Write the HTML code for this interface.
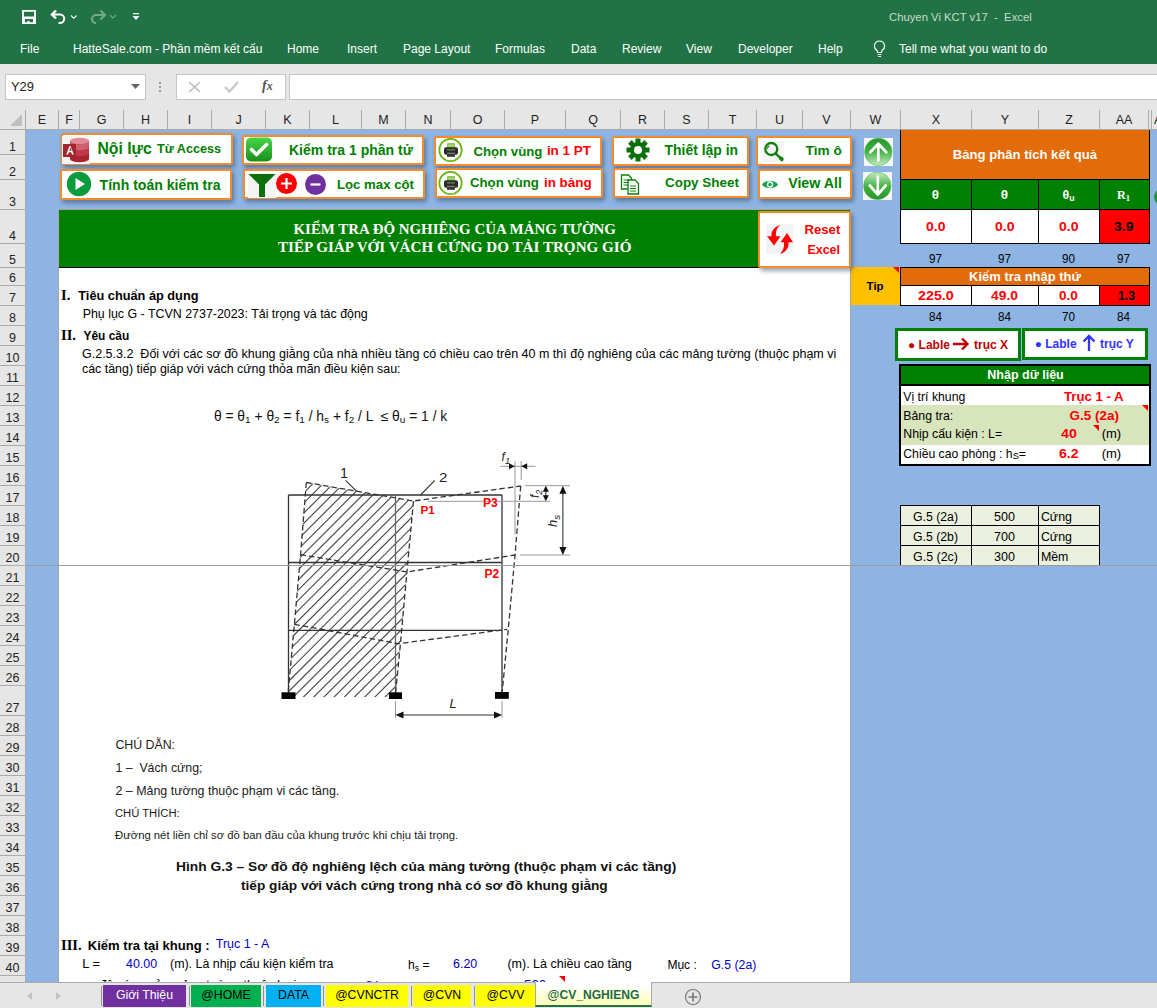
<!DOCTYPE html>
<html><head><meta charset="utf-8">
<style>
*{box-sizing:border-box}
body{margin:0;width:1157px;height:1008px;overflow:hidden;position:relative;font-family:"Liberation Sans",sans-serif;background:#8DB4E2}
.a{position:absolute;white-space:pre}
#title{left:0;top:0;width:1157px;height:64px;background:#217346}
.tab{position:absolute;top:42px;color:#fff;font-size:12px;line-height:14px}
#fbar{left:0;top:64px;width:1157px;height:46px;background:#E6E6E6}
#colh{left:0;top:110px;width:1157px;height:20px;background:#E6E6E6;border-bottom:1px solid #ABABAB}
.ch{position:absolute;top:0;height:19px;border-right:1px solid #ABABAB;font-size:12.5px;line-height:20px;text-align:center;color:#222}
#rowh{left:0;top:130px;width:26px;height:852px;background:#E6E6E6;border-right:1px solid #ABABAB}
.rh{position:absolute;left:0;width:25px;border-bottom:1px solid #ABABAB;font-size:12.5px;text-align:center;color:#222}
#tabs{left:0;top:982px;width:1157px;height:26px;background:#E6E6E6;border-top:1px solid #ABABAB}
.st{position:absolute;top:2px;height:22px;font-size:12.3px;line-height:20px;text-align:center}
.sep{position:absolute;top:3px;width:1px;height:20px;background:#8F8F8F}
.t{position:absolute;white-space:pre;line-height:1}</style></head><body>
<div id="title" class="a">
 <!-- save icon -->
 <svg class="a" style="left:22px;top:10px" width="14" height="14" viewBox="0 0 14 14"><path d="M0 0h14v14H0z M2 1.8v4.7h10V1.8z M3 9v3.3h2.5v-1.6h2v1.6H11V9z" fill="#fff" fill-rule="evenodd"/></svg>
 <svg class="a" style="left:50px;top:9px" width="30" height="15" viewBox="0 0 30 15"><path d="M3.5 5.5h6.5a4.2 4.2 0 0 1 0 8.4h-1.5" fill="none" stroke="#fff" stroke-width="2"/><path d="M6 1.5 2 5.5l4 4" fill="none" stroke="#fff" stroke-width="2.4"/><path d="M21 6.5l2.8 2.8 2.8-2.8" fill="none" stroke="#fff" stroke-width="1.1"/></svg>
 <svg class="a" style="left:89px;top:9px" width="30" height="15" viewBox="0 0 30 15"><path d="M15 6h-8a4 4 0 0 0 0 8" fill="none" stroke="#6FA98A" stroke-width="2.2"/><path d="M11.5 1.5 16 6l-4.5 4.5" fill="none" stroke="#6FA98A" stroke-width="2.2"/><path d="M21 6l3 3 3-3" fill="none" stroke="#6FA98A" stroke-width="1.2"/></svg>
 <svg class="a" style="left:132px;top:12px" width="8" height="9" viewBox="0 0 8 9"><rect x="1" y="1" width="6" height="1.3" fill="#fff"/><path d="M0.5 4h7l-3.5 4z" fill="#fff"/></svg>
 <div class="a" style="left:889px;top:11px;font-size:11.3px;color:#C8DCCF">Chuyen Vi KCT v17  -  Excel</div>
 <div class="tab" style="left:20px">File</div>
 <div class="tab" style="left:73px">HatteSale.com - Phần mềm kết cấu</div>
 <div class="tab" style="left:287px">Home</div>
 <div class="tab" style="left:347px">Insert</div>
 <div class="tab" style="left:403px">Page Layout</div>
 <div class="tab" style="left:495px">Formulas</div>
 <div class="tab" style="left:571px">Data</div>
 <div class="tab" style="left:622px">Review</div>
 <div class="tab" style="left:686px">View</div>
 <div class="tab" style="left:738px">Developer</div>
 <div class="tab" style="left:818px">Help</div>
 <svg class="a" style="left:873px;top:40px" width="13" height="18" viewBox="0 0 13 18"><path d="M6.5 1a5 5 0 0 0-3 9c.8.7 1 1.5 1 2.5h4c0-1 .2-1.8 1-2.5a5 5 0 0 0-3-9z" fill="none" stroke="#fff" stroke-width="1.2"/><path d="M4.5 14.5h4M5 16.5h3" stroke="#fff" stroke-width="1.2"/></svg>
 <div class="tab" style="left:899px">Tell me what you want to do</div>
</div>
<div id="fbar" class="a">
 <div class="a" style="left:5px;top:10px;width:141px;height:26px;background:#fff;border:1px solid #C6C6C6"></div>
 <div class="a" style="left:11px;top:15px;font-size:12.9px;color:#222">Y29</div>
 <svg class="a" style="left:131px;top:20px" width="9" height="5"><path d="M0 0h9L4.5 5z" fill="#666"/></svg>
 <div class="a" style="left:159px;top:18px;width:2px;height:2px;background:#999;box-shadow:0 4px #999,0 8px #999"></div>
 <div class="a" style="left:176px;top:10px;width:110px;height:26px;background:#fff;border:1px solid #C6C6C6"></div>
 <svg class="a" style="left:188px;top:17px" width="13" height="12"><path d="M1 1l11 10M12 1 1 11" stroke="#BDBDBD" stroke-width="1.6"/></svg>
 <svg class="a" style="left:224px;top:17px" width="15" height="12"><path d="M1 6l4.5 4.5L14 1" fill="none" stroke="#C8C8C8" stroke-width="2.4"/></svg>
 <div class="a" style="left:262px;top:14px;font-family:'Liberation Serif';font-style:italic;font-weight:700;font-size:14px;color:#555">f<span style="font-size:12px">x</span></div>
 <div class="a" style="left:289px;top:10px;width:880px;height:26px;background:#fff;border:1px solid #C6C6C6"></div>
</div>
<div id="colh" class="a">
 <svg class="a" style="left:10px;top:4px" width="13" height="12"><path d="M12 0v12H0z" fill="#BFBFBF"/></svg>
 <div class="ch" style="left:0;width:26px"></div>
 <div class="ch" style="left:26px;width:33px">E</div>
 <div class="ch" style="left:59px;width:21px">F</div>
 <div class="ch" style="left:80px;width:44px">G</div>
 <div class="ch" style="left:124px;width:44px">H</div>
 <div class="ch" style="left:168px;width:44px">I</div>
 <div class="ch" style="left:212px;width:54px">J</div>
 <div class="ch" style="left:266px;width:44px">K</div>
 <div class="ch" style="left:310px;width:52px">L</div>
 <div class="ch" style="left:362px;width:44px">M</div>
 <div class="ch" style="left:406px;width:45px">N</div>
 <div class="ch" style="left:451px;width:54px">O</div>
 <div class="ch" style="left:505px;width:61px">P</div>
 <div class="ch" style="left:566px;width:55px">Q</div>
 <div class="ch" style="left:621px;width:44px">R</div>
 <div class="ch" style="left:665px;width:44px">S</div>
 <div class="ch" style="left:709px;width:48px">T</div>
 <div class="ch" style="left:757px;width:46px">U</div>
 <div class="ch" style="left:803px;width:48px">V</div>
 <div class="ch" style="left:851px;width:50px">W</div>
 <div class="ch" style="left:901px;width:71px">X</div>
 <div class="ch" style="left:972px;width:67px">Y</div>
 <div class="ch" style="left:1039px;width:61px">Z</div>
 <div class="ch" style="left:1100px;width:49px">AA</div>
 <div class="ch" style="left:1149px;width:3px"></div><div class="ch" style="left:1152px;width:40px;text-align:left;padding-left:2px">AB</div>
</div>
<div id="rowh" class="a">
<div class="rh" style="top:0px;height:25px;line-height:34px">1</div>
<div class="rh" style="top:25px;height:25px;line-height:34px">2</div>
<div class="rh" style="top:50px;height:30px;line-height:44px">3</div>
<div class="rh" style="top:80px;height:34px;line-height:52px">4</div>
<div class="rh" style="top:114px;height:24px;line-height:32px">5</div>
<div class="rh" style="top:138px;height:18px;line-height:20px">6</div>
<div class="rh" style="top:156px;height:20px;line-height:24px">7</div>
<div class="rh" style="top:176px;height:20px;line-height:24px">8</div>
<div class="rh" style="top:196px;height:20px;line-height:24px">9</div>
<div class="rh" style="top:216px;height:20px;line-height:24px">10</div>
<div class="rh" style="top:236px;height:20px;line-height:24px">11</div>
<div class="rh" style="top:256px;height:20px;line-height:24px">12</div>
<div class="rh" style="top:276px;height:20px;line-height:24px">13</div>
<div class="rh" style="top:296px;height:20px;line-height:24px">14</div>
<div class="rh" style="top:316px;height:20px;line-height:24px">15</div>
<div class="rh" style="top:336px;height:20px;line-height:24px">16</div>
<div class="rh" style="top:356px;height:20px;line-height:24px">17</div>
<div class="rh" style="top:376px;height:20px;line-height:24px">18</div>
<div class="rh" style="top:396px;height:20px;line-height:24px">19</div>
<div class="rh" style="top:416px;height:20px;line-height:24px">20</div>
<div class="rh" style="top:436px;height:20px;line-height:24px">21</div>
<div class="rh" style="top:456px;height:20px;line-height:24px">22</div>
<div class="rh" style="top:476px;height:20px;line-height:24px">23</div>
<div class="rh" style="top:496px;height:20px;line-height:24px">24</div>
<div class="rh" style="top:516px;height:20px;line-height:24px">25</div>
<div class="rh" style="top:536px;height:20px;line-height:24px">26</div>
<div class="rh" style="top:556px;height:30px;line-height:44px">27</div>
<div class="rh" style="top:586px;height:20px;line-height:24px">28</div>
<div class="rh" style="top:606px;height:20px;line-height:24px">29</div>
<div class="rh" style="top:626px;height:20px;line-height:24px">30</div>
<div class="rh" style="top:646px;height:20px;line-height:24px">31</div>
<div class="rh" style="top:666px;height:20px;line-height:24px">32</div>
<div class="rh" style="top:686px;height:20px;line-height:24px">33</div>
<div class="rh" style="top:706px;height:20px;line-height:24px">34</div>
<div class="rh" style="top:726px;height:20px;line-height:24px">35</div>
<div class="rh" style="top:746px;height:20px;line-height:24px">36</div>
<div class="rh" style="top:766px;height:20px;line-height:24px">37</div>
<div class="rh" style="top:786px;height:20px;line-height:24px">38</div>
<div class="rh" style="top:806px;height:20px;line-height:24px">39</div>
<div class="rh" style="top:826px;height:20px;line-height:24px">40</div>
<div class="rh" style="top:846px;height:20px;line-height:24px">41</div>
</div>
<div style="position:absolute;left:0;top:0;width:1157px;height:982px;overflow:hidden">
<div class="a" style="left:59px;top:268px;width:791px;height:720px;background:#fff"></div>
<div class="a" style="left:58px;top:209px;width:793px;height:780px;border:1px solid #A6A6A6;border-bottom:0"></div>
<div class="a" style="left:59px;top:210px;width:791px;height:58px;background:#008000;border-bottom:1px solid #000"></div>
<div class="a" style="left:61px;top:133px;width:172px;height:32px;background:#fff;border:2px solid #F68B2C;border-radius:2px;box-shadow:2px 3px 4px rgba(30,50,80,.45)"></div>
<div class="a" style="left:60px;top:169px;width:172px;height:31px;background:#fff;border:2px solid #F68B2C;border-radius:2px;box-shadow:2px 3px 4px rgba(30,50,80,.45)"></div>
<div class="a" style="left:242px;top:135px;width:182px;height:30px;background:#fff;border:2px solid #F68B2C;border-radius:2px;box-shadow:2px 3px 4px rgba(30,50,80,.45)"></div>
<div class="a" style="left:243px;top:169px;width:182px;height:30px;background:#fff;border:2px solid #F68B2C;border-radius:2px;box-shadow:2px 3px 4px rgba(30,50,80,.45)"></div>
<div class="a" style="left:434px;top:136px;width:168px;height:30px;background:#fff;border:2px solid #F68B2C;border-radius:2px;box-shadow:2px 3px 4px rgba(30,50,80,.45)"></div>
<div class="a" style="left:435px;top:168px;width:168px;height:30px;background:#fff;border:2px solid #F68B2C;border-radius:2px;box-shadow:2px 3px 4px rgba(30,50,80,.45)"></div>
<div class="a" style="left:612px;top:136px;width:137px;height:30px;background:#fff;border:2px solid #F68B2C;border-radius:2px;box-shadow:2px 3px 4px rgba(30,50,80,.45)"></div>
<div class="a" style="left:613px;top:168px;width:136px;height:30px;background:#fff;border:2px solid #F68B2C;border-radius:2px;box-shadow:2px 3px 4px rgba(30,50,80,.45)"></div>
<div class="a" style="left:756px;top:136px;width:96px;height:30px;background:#fff;border:2px solid #F68B2C;border-radius:2px;box-shadow:2px 3px 4px rgba(30,50,80,.45)"></div>
<div class="a" style="left:758px;top:169px;width:94px;height:30px;background:#fff;border:2px solid #F68B2C;border-radius:2px;box-shadow:2px 3px 4px rgba(30,50,80,.45)"></div>
<svg class="a" style="left:62px;top:136px" width="28" height="28" viewBox="0 0 28 28">
<rect x="0" y="0" width="28" height="28" fill="#F4F4F4"/>
<path d="M8 5v18a9.5 3.2 0 0 0 19 0V5z" fill="#A8232F"/>
<path d="M8 11a9.5 3.2 0 0 0 19 0v6a9.5 3.2 0 0 1-19 0z" fill="#BF3A48"/>
<path d="M8 5a9.5 3.2 0 0 0 19 0v6a9.5 3.2 0 0 1-19 0z" fill="#D06070"/>
<ellipse cx="17.5" cy="5" rx="9.5" ry="3.2" fill="#E08A98"/>
<rect x="1" y="8" width="13" height="13" fill="#A4262C"/>
<path d="M4.2 18.5 7.5 10h1l3.3 8.5h-1.8l-.8-2.2H6.8L6 18.5zM7.3 14.8h2.4L8.5 11.6z" fill="#fff"/>
</svg>
<svg class="a" style="left:66px;top:171px" width="26" height="26" viewBox="0 0 26 26"><circle cx="13" cy="13" r="12.2" fill="#0A9B3C"/><path d="M9.5 7v12l9.5-6z" fill="#fff"/></svg>
<svg class="a" style="left:245px;top:137px" width="28" height="25" viewBox="0 0 28 25"><defs><linearGradient id="gck" x1="0" y1="0" x2="0" y2="1"><stop offset="0" stop-color="#45D845"/><stop offset="1" stop-color="#1A8F1A"/></linearGradient></defs>
<rect x="1" y="0.5" width="26" height="24" rx="5" fill="url(#gck)"/><path d="M6.5 12.5l5 5 10-10" fill="none" stroke="#fff" stroke-width="3.6" stroke-linecap="round" stroke-linejoin="round"/></svg>
<div class="a" style="left:248px;top:173px;width:28px;height:25px;background:#F4F4F4"></div>
<svg class="a" style="left:248px;top:173px" width="28" height="25" viewBox="0 0 28 25"><path d="M0.5 1h27L17 11.5V24h-6V11.5z" fill="#0B700B"/></svg>
<svg class="a" style="left:275px;top:172px" width="23" height="23" viewBox="0 0 23 23"><circle cx="11.5" cy="11.5" r="10.5" fill="#FF0000"/><path d="M11.5 6v11M6 11.5h11" stroke="#fff" stroke-width="2.2"/></svg>
<svg class="a" style="left:304px;top:173px" width="23" height="23" viewBox="0 0 23 23"><circle cx="11.5" cy="11.5" r="10.5" fill="#7030A0"/><path d="M6.5 11.5h10" stroke="#fff" stroke-width="2.2"/></svg>
<svg class="a" style="left:438px;top:138px" width="25" height="25" viewBox="0 0 25 25"><circle cx="12.5" cy="12" r="11.2" fill="#fff" stroke="#6BB814" stroke-width="1.8"/>
<rect x="9" y="5" width="8" height="7" rx="0.8" fill="#8CC850"/><rect x="10" y="7" width="6" height="1" fill="#B5DC90"/><rect x="10" y="9" width="6" height="1" fill="#B5DC90"/>
<rect x="6" y="9.3" width="14" height="7.5" rx="2" fill="#2A2A2A"/><rect x="9" y="11.5" width="8" height="0.8" fill="#8CC850"/><rect x="9" y="14.7" width="8" height="1.5" fill="#777"/><rect x="9" y="16.2" width="8" height="2.6" fill="#333"/></svg>
<svg class="a" style="left:438px;top:171px" width="25" height="25" viewBox="0 0 25 25"><circle cx="12.5" cy="12" r="11.2" fill="#fff" stroke="#6BB814" stroke-width="1.8"/>
<rect x="9" y="5" width="8" height="7" rx="0.8" fill="#8CC850"/><rect x="10" y="7" width="6" height="1" fill="#B5DC90"/><rect x="10" y="9" width="6" height="1" fill="#B5DC90"/>
<rect x="6" y="9.3" width="14" height="7.5" rx="2" fill="#2A2A2A"/><rect x="9" y="11.5" width="8" height="0.8" fill="#8CC850"/><rect x="9" y="14.7" width="8" height="1.5" fill="#777"/><rect x="9" y="16.2" width="8" height="2.6" fill="#333"/></svg>
<svg class="a" style="left:626px;top:138px" width="24" height="24" viewBox="0 0 24 24"><g fill="#0B700B">
<circle cx="12" cy="12" r="8"/>
<rect x="9.5" y="0.5" width="5" height="5"/><rect x="9.5" y="18.5" width="5" height="5"/><rect x="0.5" y="9.5" width="5" height="5"/><rect x="18.5" y="9.5" width="5" height="5"/>
<rect x="9.5" y="0.5" width="5" height="5" transform="rotate(45 12 12)"/><rect x="9.5" y="18.5" width="5" height="5" transform="rotate(45 12 12)"/><rect x="0.5" y="9.5" width="5" height="5" transform="rotate(45 12 12)"/><rect x="18.5" y="9.5" width="5" height="5" transform="rotate(45 12 12)"/>
</g><circle cx="12" cy="12" r="4" fill="#fff"/></svg>
<svg class="a" style="left:620px;top:174px" width="22" height="21" viewBox="0 0 22 21"><g fill="#fff" stroke="#0B800B" stroke-width="1.3">
<path d="M1.5 1h7l3 3v11h-10z"/><path d="M8 6h7l3.5 3.5V20H8z"/></g>
<path d="M3.5 6h5M3.5 8.5h5M3.5 11h5M10 12h6M10 14.5h6M10 17h6" stroke="#0B800B" stroke-width="1"/></svg>
<div class="a" style="left:763px;top:141px;width:21px;height:21px;background:#F4F4F4"></div>
<svg class="a" style="left:763px;top:141px" width="22" height="22" viewBox="0 0 22 22"><circle cx="8.3" cy="8" r="6" fill="none" stroke="#0B800B" stroke-width="2.3"/><path d="M6.3 4.8a3.3 3.3 0 0 0-1.8 3" fill="none" stroke="#0B800B" stroke-width="1.2"/><path d="M12.5 12.3l5.5 5.2" stroke="#0B800B" stroke-width="2.4" stroke-linecap="round"/><ellipse cx="18.3" cy="17.8" rx="2.6" ry="2" transform="rotate(40 18.3 17.8)" fill="#0B800B"/></svg>
<svg class="a" style="left:761px;top:178px" width="18" height="13" viewBox="0 0 18 13"><path d="M1 6.5C4 1.5 14 1.5 17 6.5 14 11.5 4 11.5 1 6.5z" fill="#14A44D"/><circle cx="9" cy="6.5" r="3.2" fill="#fff"/><circle cx="9" cy="6.5" r="1.8" fill="#14A44D"/></svg>
<svg class="a" style="left:864px;top:138px" width="29" height="28" viewBox="0 0 29 28"><rect width="29" height="28" fill="#F6F6F6"/><defs><linearGradient id="ga1" x1="0" y1="0" x2="0" y2="1"><stop offset="0" stop-color="#2A962A"/><stop offset="0.45" stop-color="#3DAF3D"/><stop offset="1" stop-color="#C5EBC5"/></linearGradient></defs><circle cx="14.3" cy="13.9" r="13.7" fill="url(#ga1)" stroke="#3FB83F" stroke-width="0.6"/><path d="M14.3 22.5V6M6.3 14.3l8-8.5 8 8.5" fill="none" stroke="#fff" stroke-width="2.7" stroke-linecap="round" stroke-linejoin="round"/></svg>
<svg class="a" style="left:863px;top:172px" width="29" height="28" viewBox="0 0 29 28"><rect width="29" height="28" fill="#F6F6F6"/><defs><linearGradient id="ga2" x1="0" y1="1" x2="0" y2="0"><stop offset="0" stop-color="#2A962A"/><stop offset="0.45" stop-color="#3DAF3D"/><stop offset="1" stop-color="#C5EBC5"/></linearGradient></defs><circle cx="14.3" cy="13.9" r="13.7" fill="url(#ga2)" stroke="#3FB83F" stroke-width="0.6"/><path d="M14.8 4.5V22.5M6.8 13.5l8 9 8-9" fill="none" stroke="#fff" stroke-width="2.7" stroke-linecap="round" stroke-linejoin="round"/></svg>
<div class="t" style="left:97.4px;top:140.64px;font-size:15.78px;font-weight:700;color:#008000;font-family:'Liberation Sans';">Nội lực</div>
<div class="t" style="left:157px;top:143.33px;font-size:12.60px;font-weight:700;color:#008000;font-family:'Liberation Sans';">Từ Access</div>
<div class="t" style="left:99.6px;top:177.51px;font-size:14.05px;font-weight:700;color:#008000;font-family:'Liberation Sans';">Tính toán kiểm tra</div>
<div class="t" style="left:289px;top:142.92px;font-size:14.03px;font-weight:700;color:#008000;font-family:'Liberation Sans';">Kiểm tra 1 phần tử</div>
<div class="t" style="left:337px;top:177.63px;font-size:13.19px;font-weight:700;color:#008000;font-family:'Liberation Sans';">Lọc max cột</div>
<div class="t" style="left:473.4px;top:144.50px;font-size:13.23px;font-weight:700;color:#008000;font-family:'Liberation Sans';">Chọn vùng</div>
<div class="t" style="left:546.9px;top:144.32px;font-size:13.45px;font-weight:700;color:#FF0000;font-family:'Liberation Sans';">in 1 PT</div>
<div class="t" style="left:470px;top:176.42px;font-size:13.21px;font-weight:700;color:#008000;font-family:'Liberation Sans';">Chọn vùng</div>
<div class="t" style="left:543.9px;top:176.20px;font-size:13.47px;font-weight:700;color:#FF0000;font-family:'Liberation Sans';">in bảng</div>
<div class="t" style="left:664.6px;top:143.93px;font-size:13.91px;font-weight:700;color:#008000;font-family:'Liberation Sans';">Thiết lập in</div>
<div class="t" style="left:665px;top:176.21px;font-size:13.45px;font-weight:700;color:#008000;font-family:'Liberation Sans';">Copy Sheet</div>
<div class="t" style="left:805.5px;top:144.18px;font-size:13.61px;font-weight:700;color:#008000;font-family:'Liberation Sans';">Tìm ô</div>
<div class="t" style="left:788.2px;top:176.45px;font-size:14.23px;font-weight:700;color:#008000;font-family:'Liberation Sans';">View All</div>
<div class="t" style="left:293.5px;top:221.52px;font-size:14.90px;font-weight:700;color:#fff;font-family:'Liberation Serif';">KIỂM TRA ĐỘ NGHIÊNG CỦA MẢNG TƯỜNG</div>
<div class="t" style="left:278px;top:240.34px;font-size:15.12px;font-weight:700;color:#fff;font-family:'Liberation Serif';">TIẾP GIÁP VỚI VÁCH CỨNG DO TẢI TRỌNG GIÓ</div>
<div class="t" style="left:61px;top:287.86px;font-size:14.50px;font-weight:700;color:#000;font-family:'Liberation Serif';">I.</div>
<div class="t" style="left:78.3px;top:289.71px;font-size:12.75px;font-weight:700;color:#000;font-family:'Liberation Sans';">Tiêu chuẩn áp dụng</div>
<div class="t" style="left:82.7px;top:308.09px;font-size:12.42px;font-weight:400;color:#000;font-family:'Liberation Sans';">Phụ lục G - TCVN 2737-2023: Tải trọng và tác động</div>
<div class="t" style="left:61px;top:327.86px;font-size:14.50px;font-weight:700;color:#000;font-family:'Liberation Serif';">II.</div>
<div class="t" style="left:83.5px;top:330.69px;font-size:11.94px;font-weight:700;color:#000;font-family:'Liberation Sans';">Yêu cầu</div>
<div class="t" style="left:82px;top:348.12px;font-size:12.50px;font-weight:400;color:#000;font-family:'Liberation Sans';">G.2.5.3.2  Đối với các sơ đồ khung giằng của nhà nhiều tầng có chiều cao trên 40 m thì độ nghiêng của các mảng tường (thuộc phạm vi</div>
<div class="t" style="left:82px;top:363.48px;font-size:12.42px;font-weight:400;color:#000;font-family:'Liberation Sans';">các tầng) tiếp giáp với vách cứng thỏa mãn điều kiện sau:</div>
<div class="t" style="left:213.9px;top:409.88px;font-size:13.85px;font-weight:400;color:#111;font-family:'Liberation Sans';">θ = θ<span style="font-size:0.72em;vertical-align:-0.25em">1</span> + θ<span style="font-size:0.72em;vertical-align:-0.25em">2</span> = f<span style="font-size:0.72em;vertical-align:-0.25em">1</span> / h<span style="font-size:0.72em;vertical-align:-0.25em">s</span> + f<span style="font-size:0.72em;vertical-align:-0.25em">2</span> / L  ≤ θ<span style="font-size:0.72em;vertical-align:-0.25em">u</span> = 1 / k</div>
<div class="t" style="left:115.4px;top:738.65px;font-size:12.35px;font-weight:400;color:#1a1a1a;font-family:'Liberation Sans';">CHÚ DẪN:</div>
<div class="t" style="left:115.4px;top:761.56px;font-size:12.33px;font-weight:400;color:#1a1a1a;font-family:'Liberation Sans';">1 –  Vách cứng;</div>
<div class="t" style="left:115.4px;top:785.07px;font-size:12.44px;font-weight:400;color:#1a1a1a;font-family:'Liberation Sans';">2 – Mảng tường thuộc phạm vi các tầng.</div>
<div class="t" style="left:115px;top:808.49px;font-size:11.23px;font-weight:400;color:#1a1a1a;font-family:'Liberation Sans';">CHÚ THÍCH:</div>
<div class="t" style="left:115px;top:830.24px;font-size:11.30px;font-weight:400;color:#1a1a1a;font-family:'Liberation Sans';">Đường nét liền chỉ sơ đồ ban đầu của khung trước khi chịu tải trọng.</div>
<div class="t" style="left:176.2px;top:861.46px;font-size:12.80px;font-weight:700;color:#111;font-family:'Liberation Sans';transform:scaleX(1.0765);transform-origin:0 0;">Hình G.3 – Sơ đồ độ nghiêng lệch của mảng tường (thuộc phạm vi các tầng)</div>
<div class="t" style="left:241px;top:879.86px;font-size:12.80px;font-weight:700;color:#111;font-family:'Liberation Sans';transform:scaleX(1.0664);transform-origin:0 0;">tiếp giáp với vách cứng trong nhà có sơ đồ khung giằng</div>
<div class="t" style="left:61px;top:938.16px;font-size:14.50px;font-weight:700;color:#000;font-family:'Liberation Serif';">III.</div>
<div class="t" style="left:87.8px;top:938.95px;font-size:13.06px;font-weight:700;color:#000;font-family:'Liberation Sans';">Kiểm tra tại khung :</div>
<div class="t" style="left:215.8px;top:938.05px;font-size:12.46px;font-weight:400;color:#0000CC;font-family:'Liberation Sans';">Trục 1 - A</div>
<div class="t" style="left:82.3px;top:958.04px;font-size:12.83px;font-weight:400;color:#000;font-family:'Liberation Sans';">L =</div>
<div class="t" style="left:125.9px;top:958.40px;font-size:12.40px;font-weight:400;color:#0000CC;font-family:'Liberation Sans';transform:scaleX(1.0027);transform-origin:0 0;">40.00</div>
<div class="t" style="left:170px;top:958.40px;font-size:12.41px;font-weight:400;color:#000;font-family:'Liberation Sans';">(m). Là nhịp cấu kiện kiểm tra</div>
<div class="t" style="left:408px;top:959.32px;font-size:12.15px;font-weight:400;color:#000;font-family:'Liberation Sans';">h<span style="font-size:0.72em;vertical-align:-0.25em">s</span> =</div>
<div class="t" style="left:453px;top:958.40px;font-size:12.40px;font-weight:400;color:#0000CC;font-family:'Liberation Sans';transform:scaleX(1.0073);transform-origin:0 0;">6.20</div>
<div class="t" style="left:507.4px;top:958.31px;font-size:12.51px;font-weight:400;color:#000;font-family:'Liberation Sans';">(m). Là chiều cao tầng</div>
<div class="t" style="left:667.4px;top:958.71px;font-size:12.03px;font-weight:400;color:#000;font-family:'Liberation Sans';">Mục :</div>
<div class="t" style="left:711.3px;top:958.51px;font-size:12.28px;font-weight:400;color:#0000CC;font-family:'Liberation Sans';">G.5 (2a)</div>
<div class="t" style="left:92px;top:979.00px;font-size:12.40px;font-weight:400;color:#000;font-family:'Liberation Sans';">- độ cứng của mảng tường thuộc loại :</div>
<div class="t" style="left:365px;top:979.93px;font-size:10.71px;font-weight:400;color:#0000CC;font-family:'Liberation Sans';">Cứng</div>
<div class="t" style="left:523.7px;top:978.50px;font-size:12.40px;font-weight:400;color:#0000CC;font-family:'Liberation Sans';transform:scaleX(1.0731);transform-origin:0 0;">500</div>
<svg class="a" style="left:559px;top:976px" width="6" height="6"><path d="M0 0h6v6z" fill="#f00"/></svg>
<div class="a" style="left:900px;top:130px;width:250px;height:114px;background:#fff;border:1px solid #000"></div>
<div class="a" style="left:901px;top:130px;width:248px;height:49px;background:#E26B0A"></div>
<div class="a" style="left:901px;top:179px;width:248px;height:1px;background:#000"></div>
<div class="a" style="left:901px;top:180px;width:248px;height:29px;background:#008000"></div>
<div class="a" style="left:901px;top:209px;width:248px;height:1px;background:#000"></div>
<div class="a" style="left:1100px;top:210px;width:49px;height:33px;background:#f00"></div>
<div class="a" style="left:971px;top:179px;width:1px;height:64px;background:#000"></div>
<div class="a" style="left:1038px;top:179px;width:1px;height:64px;background:#000"></div>
<div class="a" style="left:1099px;top:179px;width:1px;height:64px;background:#000"></div>
<div class="t" style="left:952.8px;top:148.10px;font-size:13.11px;font-weight:700;color:#fff;font-family:'Liberation Sans';">Bảng phân tích kết quả</div>
<div class="t" style="left:931.85px;top:187.87px;font-size:13.50px;font-weight:700;color:#fff;font-family:'Liberation Sans';">θ</div>
<div class="t" style="left:1000.85px;top:187.87px;font-size:13.50px;font-weight:700;color:#fff;font-family:'Liberation Sans';">θ</div>
<div class="t" style="left:1062.5px;top:188.81px;font-size:12.39px;font-weight:700;color:#fff;font-family:'Liberation Sans';">θ<span style="font-size:0.7em;vertical-align:-0.2em">u</span></div>
<div class="t" style="left:1117.0px;top:189.14px;font-size:12.13px;font-weight:700;color:#fff;font-family:'Liberation Serif';">R<span style="font-size:0.7em;vertical-align:-0.2em">1</span></div>
<div class="t" style="left:925.8px;top:220.74px;font-size:12.00px;font-weight:700;color:#FF0000;font-family:'Liberation Sans';transform:scaleX(1.1625);transform-origin:0 0;">0.0</div>
<div class="t" style="left:994.8px;top:220.74px;font-size:12.00px;font-weight:700;color:#FF0000;font-family:'Liberation Sans';transform:scaleX(1.1625);transform-origin:0 0;">0.0</div>
<div class="t" style="left:1058.8px;top:220.74px;font-size:12.00px;font-weight:700;color:#FF0000;font-family:'Liberation Sans';transform:scaleX(1.1625);transform-origin:0 0;">0.0</div>
<div class="t" style="left:1113.8px;top:220.74px;font-size:12.00px;font-weight:700;color:#000;font-family:'Liberation Sans';transform:scaleX(1.1625);transform-origin:0 0;">3.9</div>
<div class="t" style="left:929.0px;top:252.50px;font-size:12.40px;font-weight:400;color:#000;font-family:'Liberation Sans';transform:scaleX(0.9422);transform-origin:0 0;">97</div>
<div class="t" style="left:998.0px;top:252.50px;font-size:12.40px;font-weight:400;color:#000;font-family:'Liberation Sans';transform:scaleX(0.9422);transform-origin:0 0;">97</div>
<div class="t" style="left:1062.0px;top:252.50px;font-size:12.40px;font-weight:400;color:#000;font-family:'Liberation Sans';transform:scaleX(0.9422);transform-origin:0 0;">90</div>
<div class="t" style="left:1117.0px;top:252.50px;font-size:12.40px;font-weight:400;color:#000;font-family:'Liberation Sans';transform:scaleX(0.9422);transform-origin:0 0;">97</div>
<div class="a" style="left:851px;top:267px;width:49px;height:38px;background:#FFC000"></div>
<svg class="a" style="left:893px;top:267px" width="6" height="6"><path d="M0 0h6v6z" fill="#f00"/></svg>
<div class="t" style="left:866.6px;top:281.29px;font-size:11.47px;font-weight:700;color:#000;font-family:'Liberation Sans';">Tip</div>
<div class="a" style="left:900px;top:267px;width:250px;height:39px;background:#fff;border:1px solid #000"></div>
<div class="a" style="left:901px;top:268px;width:248px;height:17px;background:#E26B0A"></div>
<div class="a" style="left:901px;top:285px;width:248px;height:1px;background:#000"></div>
<div class="a" style="left:1100px;top:286px;width:49px;height:19px;background:#f00"></div>
<div class="a" style="left:971px;top:285px;width:1px;height:20px;background:#000"></div>
<div class="a" style="left:1038px;top:285px;width:1px;height:20px;background:#000"></div>
<div class="a" style="left:1099px;top:285px;width:1px;height:20px;background:#000"></div>
<div class="t" style="left:969px;top:269.99px;font-size:13.00px;font-weight:700;color:#fff;font-family:'Liberation Sans';">Kiểm tra nhập thứ</div>
<div class="t" style="left:918.4px;top:289.74px;font-size:12.00px;font-weight:700;color:#FF0000;font-family:'Liberation Sans';transform:scaleX(1.1921);transform-origin:0 0;">225.0</div>
<div class="t" style="left:991.4px;top:289.74px;font-size:12.00px;font-weight:700;color:#FF0000;font-family:'Liberation Sans';transform:scaleX(1.1559);transform-origin:0 0;">49.0</div>
<div class="t" style="left:1059.4px;top:289.74px;font-size:12.00px;font-weight:700;color:#FF0000;font-family:'Liberation Sans';transform:scaleX(1.1326);transform-origin:0 0;">0.0</div>
<div class="t" style="left:1117.9px;top:289.74px;font-size:12.00px;font-weight:700;color:#000;font-family:'Liberation Sans';transform:scaleX(1.0247);transform-origin:0 0;">1.3</div>
<div class="t" style="left:929.0px;top:311.10px;font-size:12.40px;font-weight:400;color:#000;font-family:'Liberation Sans';transform:scaleX(0.9422);transform-origin:0 0;">84</div>
<div class="t" style="left:998.0px;top:311.10px;font-size:12.40px;font-weight:400;color:#000;font-family:'Liberation Sans';transform:scaleX(0.9422);transform-origin:0 0;">84</div>
<div class="t" style="left:1062.0px;top:311.10px;font-size:12.40px;font-weight:400;color:#000;font-family:'Liberation Sans';transform:scaleX(0.9422);transform-origin:0 0;">70</div>
<div class="t" style="left:1117.0px;top:311.10px;font-size:12.40px;font-weight:400;color:#000;font-family:'Liberation Sans';transform:scaleX(0.9422);transform-origin:0 0;">84</div>
<div class="a" style="left:895px;top:328px;width:126px;height:33px;background:#fff;border:3px solid #008000"></div>
<div class="a" style="left:1022px;top:328px;width:126px;height:32px;background:#fff;border:3px solid #008000"></div>
<div class="t" style="left:908px;top:338.74px;font-size:12.00px;font-weight:700;color:#C00000;font-family:'Liberation Sans';">● Lable</div>
<svg class="a" style="left:952px;top:337px" width="18" height="14"><path d="M1 7h15M10 1.5l5.5 5.5-5.5 5.5" fill="none" stroke="#C00000" stroke-width="2.3"/></svg>
<div class="t" style="left:974px;top:338.74px;font-size:12.00px;font-weight:700;color:#C00000;font-family:'Liberation Sans';">trục X</div>
<div class="t" style="left:1034.7px;top:338.14px;font-size:12.00px;font-weight:700;color:#3333FF;font-family:'Liberation Sans';">● Lable</div>
<svg class="a" style="left:1082px;top:334px" width="14" height="18"><path d="M7 17V2M1.5 7.5 7 2l5.5 5.5" fill="none" stroke="#3333FF" stroke-width="2.3"/></svg>
<div class="t" style="left:1100px;top:338.14px;font-size:12.00px;font-weight:700;color:#3333FF;font-family:'Liberation Sans';">trục Y</div>
<div class="a" style="left:899px;top:364px;width:252px;height:102px;background:#fff;border:2px solid #000"></div>
<div class="a" style="left:901px;top:366px;width:248px;height:18px;background:#008000"></div>
<div class="a" style="left:901px;top:384px;width:248px;height:2px;background:#000"></div>
<div class="a" style="left:901px;top:405px;width:248px;height:40px;background:#D8E4BC"></div>
<svg class="a" style="left:1142px;top:405px" width="6" height="6"><path d="M0 0h6v6z" fill="#f00"/></svg>
<svg class="a" style="left:1093px;top:425px" width="6" height="6"><path d="M0 0h6v6z" fill="#f00"/></svg>
<div class="t" style="left:987.3px;top:369.42px;font-size:12.50px;font-weight:700;color:#fff;font-family:'Liberation Sans';">Nhập dữ liệu</div>
<div class="t" style="left:903.3px;top:390.70px;font-size:12.28px;font-weight:400;color:#000;font-family:'Liberation Sans';">Vị trí khung</div>
<div class="t" style="left:1064px;top:389.94px;font-size:13.18px;font-weight:700;color:#FF0000;font-family:'Liberation Sans';">Trục 1 - A</div>
<div class="t" style="left:903.3px;top:410.09px;font-size:12.30px;font-weight:400;color:#000;font-family:'Liberation Sans';">Bảng tra:</div>
<div class="t" style="left:1069.5px;top:408.60px;font-size:13.47px;font-weight:700;color:#FF0000;font-family:'Liberation Sans';">G.5 (2a)</div>
<div class="t" style="left:903.3px;top:428.19px;font-size:12.30px;font-weight:400;color:#000;font-family:'Liberation Sans';">Nhịp cấu kiện : L=</div>
<div class="t" style="left:1060.8px;top:427.94px;font-size:12.00px;font-weight:700;color:#FF0000;font-family:'Liberation Sans';transform:scaleX(1.1827);transform-origin:0 0;">40</div>
<div class="t" style="left:1101.7px;top:427.08px;font-size:13.02px;font-weight:400;color:#000;font-family:'Liberation Sans';">(m)</div>
<div class="t" style="left:903.3px;top:448.14px;font-size:12.23px;font-weight:400;color:#000;font-family:'Liberation Sans';">Chiều cao phòng : h<span style="font-size:0.75em;vertical-align:-0.15em">S</span>=</div>
<div class="t" style="left:1059.4px;top:447.74px;font-size:12.00px;font-weight:700;color:#FF0000;font-family:'Liberation Sans';transform:scaleX(1.1745);transform-origin:0 0;">6.2</div>
<div class="t" style="left:1101.7px;top:447.28px;font-size:13.02px;font-weight:400;color:#000;font-family:'Liberation Sans';">(m)</div>
<div class="a" style="left:900px;top:505px;width:200px;height:61px;background:#EBF1DE;border:1px solid #000"></div>
<div class="a" style="left:900px;top:525px;width:200px;height:1px;background:#000"></div>
<div class="a" style="left:900px;top:545px;width:200px;height:1px;background:#000"></div>
<div class="a" style="left:971px;top:505px;width:1px;height:61px;background:#000"></div>
<div class="a" style="left:1038px;top:505px;width:1px;height:61px;background:#000"></div>
<div class="t" style="left:913.0px;top:510.71px;font-size:12.28px;font-weight:400;color:#000;font-family:'Liberation Sans';">G.5 (2a)</div>
<div class="t" style="left:994.0px;top:510.60px;font-size:12.40px;font-weight:400;color:#000;font-family:'Liberation Sans';transform:scaleX(1.0151);transform-origin:0 0;">500</div>
<div class="t" style="left:1040.9px;top:510.60px;font-size:12.40px;font-weight:400;color:#000;font-family:'Liberation Sans';">Cứng</div>
<div class="t" style="left:913.0px;top:530.71px;font-size:12.28px;font-weight:400;color:#000;font-family:'Liberation Sans';">G.5 (2b)</div>
<div class="t" style="left:994.0px;top:530.60px;font-size:12.40px;font-weight:400;color:#000;font-family:'Liberation Sans';transform:scaleX(1.0151);transform-origin:0 0;">700</div>
<div class="t" style="left:1040.9px;top:530.60px;font-size:12.40px;font-weight:400;color:#000;font-family:'Liberation Sans';">Cứng</div>
<div class="t" style="left:913.0px;top:550.55px;font-size:12.46px;font-weight:400;color:#000;font-family:'Liberation Sans';">G.5 (2c)</div>
<div class="t" style="left:994.0px;top:550.60px;font-size:12.40px;font-weight:400;color:#000;font-family:'Liberation Sans';transform:scaleX(1.0151);transform-origin:0 0;">300</div>
<div class="t" style="left:1040.9px;top:550.60px;font-size:12.40px;font-weight:400;color:#000;font-family:'Liberation Sans';">Mềm</div>
<svg class="a" style="left:1150px;top:185px" width="7" height="24"><circle cx="12" cy="12" r="8" fill="#1E9A3C"/></svg>
<svg class="a" style="left:260px;top:440px" width="340" height="290" viewBox="260 440 340 290">
<defs><clipPath id="hc"><path d="M306.3 482.5L413.5 501L395.5 697L288 697z"/></clipPath></defs>
<path d="M15.7 740L315.7 440M25.9 740L325.9 440M36.1 740L336.1 440M46.3 740L346.3 440M56.5 740L356.5 440M66.7 740L366.7 440M76.9 740L376.9 440M87.1 740L387.1 440M97.3 740L397.3 440M107.5 740L407.5 440M117.7 740L417.7 440M127.9 740L427.9 440M138.1 740L438.1 440M148.3 740L448.3 440M158.5 740L458.5 440M168.7 740L468.7 440M178.9 740L478.9 440M189.1 740L489.1 440M199.3 740L499.3 440M209.5 740L509.5 440M219.7 740L519.7 440M229.9 740L529.9 440M240.1 740L540.1 440M250.3 740L550.3 440M260.5 740L560.5 440M270.7 740L570.7 440M280.9 740L580.9 440M291.1 740L591.1 440M301.3 740L601.3 440M311.5 740L611.5 440M321.7 740L621.7 440M331.9 740L631.9 440M342.1 740L642.1 440M352.3 740L652.3 440M362.5 740L662.5 440M372.7 740L672.7 440" stroke="#4a4a4a" stroke-width="1.15" clip-path="url(#hc)" fill="none"/>
<g stroke="#333" stroke-width="1.3" fill="none">
<path d="M288.5 495V694M502 495V694M288.5 495H502M288.5 562.5H502M288.5 630.3H502"/><path d="M395.5 495V694" stroke="#666"/>
</g>
<g stroke="#333" stroke-width="1.3" fill="none" stroke-dasharray="5.5 3">
<path d="M306.3 482.5L300.6 554.7L294.4 624.3L288 694"/>
<path d="M306.3 482.5L413.5 501L520.7 486"/>
<path d="M413.5 501L407 571L400.5 643L395.5 694"/>
<path d="M520.7 486L515 555L508.3 629L502 694"/>
<path d="M300.6 554.7L407 572L515 555"/>
<path d="M294.4 624.3L398.2 643.7L507.3 629.3"/>
</g>
<g fill="#000"><rect x="281.5" y="692.3" width="14" height="6.7"/><rect x="389" y="692.3" width="13" height="6.7"/><rect x="495" y="692" width="13.8" height="6.8"/></g>
<g stroke="#333" stroke-width="1.1"><path d="M345.6 480.3L356.7 491.4M420.5 495L434.8 480.3"/></g>
<g stroke="#999" stroke-width="1" fill="none">
<path d="M428 501.3H550M515 461.4V534.5M521.2 461V480M500.5 466.3H535.5M524.8 485.7H570M519.9 555H570M395.5 701V718M502 701V718"/>
</g>
<g stroke="#333" stroke-width="1.1" fill="none"><path d="M545.8 489V498M562.9 489V552M399 715H498"/></g>
<g fill="#111">
<path d="M515 466.3l-6 -3v6z"/><path d="M521.2 466.3l6 -3v6z"/>
<path d="M545.8 485.7l-3 6h6z"/><path d="M545.8 501.3l-3 -6h6z"/>
<path d="M562.9 485.7l-3.5 8h7z"/><path d="M562.9 555l-3.5 -8h7z"/>
<path d="M395.5 715l8 -3.5v7z"/><path d="M502 715l-8 -3.5v7z"/>
</g>
</svg>
<div class="t" style="left:340.3px;top:465.65px;font-size:14.00px;font-weight:400;color:#222;font-family:'Liberation Sans';transform:scaleX(1.0261);transform-origin:0 0;">1</div>
<div class="t" style="left:439.4px;top:470.70px;font-size:13.00px;font-weight:400;color:#222;font-family:'Liberation Sans';transform:scaleX(1.1611);transform-origin:0 0;">2</div>
<div class="t" style="left:420.5px;top:503.71px;font-size:11.68px;font-weight:700;color:#FF0000;font-family:'Liberation Sans';">P1</div>
<div class="t" style="left:482.9px;top:497.47px;font-size:12.09px;font-weight:700;color:#FF0000;font-family:'Liberation Sans';">P3</div>
<div class="t" style="left:484.6px;top:567.54px;font-size:12.01px;font-weight:700;color:#FF0000;font-family:'Liberation Sans';">P2</div>
<div class="t" style="left:501.5px;top:450.67px;font-size:12.20px;font-weight:400;color:#222;font-family:'Liberation Sans';font-style:italic">f<span style="font-size:0.75em;vertical-align:-0.3em">1</span></div>
<div class="t" style="left:449.6px;top:697.65px;font-size:12.94px;font-weight:400;color:#222;font-family:'Liberation Sans';font-style:italic">L</div>
<div class="t" style="left:529px;top:486px;width:12px;height:13px;font-size:12px;color:#222;font-style:italic;line-height:12px"><div style="transform:rotate(-90deg);transform-origin:6px 6px;width:14px;white-space:pre">f<span style="font-size:0.75em;vertical-align:-0.3em">2</span></div></div>
<div class="t" style="left:546px;top:513px;width:13px;height:15px;font-size:13px;color:#222;font-style:italic;line-height:13px"><div style="transform:rotate(-90deg);transform-origin:7px 7px;width:15px;white-space:pre">h<span style="font-size:0.75em;vertical-align:-0.3em">s</span></div></div>
<div class="a" style="left:758px;top:211px;width:93px;height:57px;background:#fff;border:2px solid #F68B2C;border-radius:2px;box-shadow:2px 3px 4px rgba(30,50,80,.45)"></div>
<svg class="a" style="left:766px;top:224px" width="28" height="31" viewBox="0 0 28 31"><rect x="0" y="0" width="27" height="30" fill="#F4F4F4"/>
<path d="M14.5 1C8 3 5 7 5.5 12.2H1L8 21.5L14.5 12.2H10C9.5 7 11 3.5 14.5 1z" fill="#FF0000"/>
<path d="M14 30C20 28 23 24 22.5 18.2H27L21 9L14.5 18.2H18C18.5 23 17 26.5 14 30z" fill="#FF0000"/></svg>
<div class="t" style="left:804.4px;top:223.45px;font-size:13.18px;font-weight:700;color:#FF0000;font-family:'Liberation Sans';">Reset</div>
<div class="t" style="left:807.4px;top:244.04px;font-size:12.47px;font-weight:700;color:#FF0000;font-family:'Liberation Sans';">Excel</div>
<div class="a" style="left:26px;top:565px;width:1131px;height:1px;background:#9B9B9B"></div>
</div>
<div id="tabs" class="a">
 <svg class="a" style="left:27px;top:9px" width="5" height="8"><path d="M5 0v8L0 4z" fill="#C4C4C4"/></svg>
 <svg class="a" style="left:56px;top:9px" width="5" height="8"><path d="M0 0v8l5-4z" fill="#C4C4C4"/></svg>
 <div class="sep" style="left:101px"></div>
 <div class="st" style="left:103px;width:83px;background:#7030A0;color:#fff">Giới Thiệu</div>
 <div class="sep" style="left:189px"></div>
 <div class="st" style="left:191px;width:70px;background:#00B050;color:#000">@HOME</div>
 <div class="sep" style="left:263px"></div>
 <div class="st" style="left:266px;width:55px;background:#00B0F0;color:#000">DATA</div>
 <div class="sep" style="left:323px"></div>
 <div class="st" style="left:326px;width:82px;background:#FFFF00;color:#000">@CVNCTR</div>
 <div class="sep" style="left:411px"></div>
 <div class="st" style="left:413px;width:58px;background:#FFFF00;color:#000">@CVN</div>
 <div class="sep" style="left:474px"></div>
 <div class="st" style="left:476px;width:59px;background:#FFFF00;color:#000">@CVV</div>
 <div class="a" style="left:535px;top:-1px;width:117px;height:25px;background:linear-gradient(#fff 15%,#FFFFB8);border-left:1px solid #ABABAB;border-right:1px solid #ABABAB;border-bottom:2px solid #217346;color:#1D6B3E;font-weight:700;font-size:12.1px;line-height:26px;text-align:center">@CV_NGHIENG</div>
 <svg class="a" style="left:684px;top:5px" width="18" height="18"><circle cx="9" cy="9" r="7.5" fill="none" stroke="#777" stroke-width="1.2"/><path d="M9 4.5v9M4.5 9h9" stroke="#777" stroke-width="1.6"/></svg>
</div>
</body></html>
